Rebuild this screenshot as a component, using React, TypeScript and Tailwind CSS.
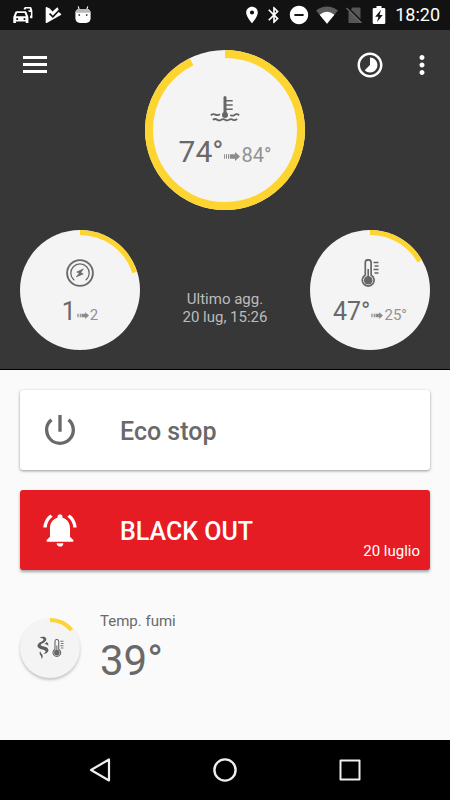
import React from "react";
import {
  MdBluetooth,
  MdDoNotDisturbOn,
  MdMoreVert,
  MdNotificationsActive,
  MdPlace,
  MdPowerSettingsNew,
  MdTimelapse,
} from "react-icons/md";

function Gauge({
  size,
  stroke,
  value,
  className,
  children,
}: {
  size: number;
  stroke: number;
  value: number;
  className: string;
  children: React.ReactNode;
}) {
  const r = (size - stroke) / 2;
  const c = 2 * Math.PI * r;
  return (
    <div className={`relative flex shrink-0 flex-col items-center rounded-full bg-[#f4f4f4] ${className}`}>
      <svg className="absolute inset-0 size-full -rotate-90" viewBox={`0 0 ${size} ${size}`} aria-hidden="true">
        <circle
          cx={size / 2}
          cy={size / 2}
          r={r}
          fill="none"
          stroke="#fed530"
          strokeWidth={stroke}
          strokeDasharray={`${c * value} ${c}`}
        />
      </svg>
      {children}
    </div>
  );
}

function Arrow({ className }: { className: string }) {
  return (
    <svg className={`shrink-0 ${className}`} viewBox="0 0 16 9" fill="#8c8c8c" aria-hidden="true">
      <path d="M0 2.300h.9v4.400H0zM1.900 2.300h1.100v4.400H1.900zM4 2.300h1.200v4.400H4zM6 2.300h5V0l5 4.500L11 9V6.700H6z" />
    </svg>
  );
}

function WaterTempIcon() {
  return (
    <svg className="h-7 w-[30px]" viewBox="0 0 30 28" fill="none" stroke="#666" aria-hidden="true">
      <path d="M15 3.500V21" strokeWidth="3" strokeLinecap="round" />
      <circle cx="15" cy="21" r="3" fill="#666" stroke="none" />
      <path d="M16 6.700h6.700M16 11h6.700M16 15.300h6.700" strokeWidth="1.500" />
      <path
        d="M.8 21.200c2-1.700 3.200-1.400 4.600-.6s2.700.9 4.600-.3M20.300 20.900c1.500 1 2.800.9 4.200 0s2.800-1.200 4.700.3M2.800 25.800c2-1.300 3.200-1 4.400-.1s2.600.9 4 0 2.600-.9 3.900 0 2.600.9 4 0 2.500-.9 3.800 0 2.300.7 4.300-.6"
        strokeWidth="1.800"
      />
    </svg>
  );
}

function PowerGaugeIcon() {
  return (
    <svg className="size-7" viewBox="0 0 28 28" fill="none" stroke="#6a6a6a" aria-hidden="true">
      <circle cx="14" cy="14" r="12.900" strokeWidth="1.900" />
      <path d="M8 21A9.200 9.200 0 1 1 20 21" strokeWidth="1.300" />
      <path d="M6.300 19l2.200 2.200M21.700 19l-2.200 2.200" strokeWidth="1" />
      <path d="M17.500 9.800l-6.800 3.300 2.600 1-3 3.800 7-3-2.500-1.300z" fill="#6a6a6a" strokeWidth=".6" />
    </svg>
  );
}

function ThermometerIcon({ className }: { className: string }) {
  return (
    <svg className={className} viewBox="0 0 18 28" fill="none" stroke="#666" aria-hidden="true">
      <path d="M4.300 16V3.700a2.900 2.900 0 0 1 5.800 0V16a5.900 5.900 0 1 1-5.800 0z" strokeWidth="1.700" />
      <circle cx="7.200" cy="21.200" r="4.300" fill="#666" stroke="none" />
      <path d="M7.200 10v9" strokeWidth="1.600" />
      <path d="M12.500 3.500h5M13.500 7h4M12.500 10.500h5M13.500 14h4" strokeWidth="1.400" />
    </svg>
  );
}

function SmokeIcon() {
  return (
    <svg className="h-6 w-3" viewBox="0 0 12 24" fill="#5e5e5e" aria-hidden="true">
      <path d="M2.500 1.500C4.500.6 8 .3 9 2.300c.8 1.600-.2 3-2 4.100C5.300 7.400 3.600 8 3.700 9c.2 1.300 3.800 1.200 6 2.500 2 1.200 2.300 3.200.8 4.700-1 1-2.700 1.500-4.300 1.600 1.500-.9 2.600-1.700 2.300-2.600-.4-1.200-3.700-1.300-5.900-2.600C.4 11.400-.2 9.400 1.300 7.700c1.200-1.300 3.400-1.900 4.600-2.900.9-.8.8-1.700 0-2.300-.9-.6-2.200-.7-3.400-1z" />
      <path d="M9.500 6c1.600.8 2.200 2.200 1.600 3.800-.8-1.200-2-1.700-3.600-1.900C8.500 7.400 9.200 6.800 9.500 6z" />
      <path d="M3.200 15.200c-1 1.500-.6 2.900.3 4.100.7 1 1.100 2 1 3.700 1.300-1.200 1.600-2.900.8-4.300-.6-1.100-1.800-1.900-2.100-3.500z" />
    </svg>
  );
}

function StatusBar() {
  return (
    <div className="flex h-[30px] items-center justify-between bg-[#121212] pr-[10px] pl-[13px] text-white">
      <div className="flex items-center gap-3">
        <svg className="h-[18px] w-5" viewBox="0 0 20 18" fill="currentColor" aria-hidden="true">
          <path d="M10.500 3.200L11.300 1.500Q11.600.9 12.300.9h5.200q.8 0 1 .8L19.400 5v7.200h-2.200l-.3-2.500 1-.2V6h-2L15 4.500l2.200-.2-.6-1.800h-3.700l-.4 1.300z" />
          <path
            fillRule="evenodd"
            d="M3.700 5.200h8.600q.9 0 1.200.8L15.400 11v6h-2.600v-1.600H2.900V17H.3v-6l2-5q.4-.8 1.400-.8zM4.100 6.900L2.800 10.300h10.100l-1.300-3.400zM4.200 11.900a1.100 1.100 0 1 0 .01 0zM11.500 11.900a1.100 1.100 0 1 0 .01 0z"
          />
        </svg>
        <svg className="h-[18px] w-[18px]" viewBox="0 0 18 18" fill="currentColor" aria-hidden="true">
          <path d="M.7 1.500Q.7.800 1.500 1.100L4.800 2.600 7.500 5.500 12.300 1.300l1 1.200.4 3.500 2.200 1.700q.8.700 0 1.200L1.700 17q-1 .4-1-.6z" />
          <path d="M4.600 7.600l3.300 3.300 6-6.400" fill="none" stroke="#121212" strokeWidth="1.700" />
        </svg>
        <svg className="h-[18px] w-4" viewBox="0 0 16 18" fill="currentColor" aria-hidden="true">
          <path d="M3.200.3l1.300 4M12.800.3l-1.300 4" stroke="currentColor" strokeWidth="1.100" />
          <path d="M.4 6.500Q1 3.200 4 3h8q3 .2 3.600 3.500v6q-.3 4-4.600 4.500H5q-4.300-.5-4.600-4.500z" />
          <path d="M.4 6.800Q.8 3.200 4 3h8q3.200.2 3.600 3.800z" fill="#b8b8b8" />
          <circle cx="4.300" cy="9" r=".9" fill="#444" />
          <circle cx="11.700" cy="9" r=".9" fill="#444" />
        </svg>
      </div>
      <div className="flex items-center">
        <span className="flex w-[22px] justify-center"><MdPlace size={20} /></span>
        <span className="flex w-[22px] justify-center"><MdBluetooth size={20} /></span>
        <span className="flex w-7 justify-center"><MdDoNotDisturbOn size={22} /></span>
        <span className="flex w-7 justify-center">
          <svg className="h-[18px] w-[22px]" viewBox="0 0 22 18" aria-hidden="true">
            <path d="M0 4.500Q11-3.700 22 4.500L11 17.800z" fill="#5c5c5c" />
            <path d="M3.600 8.700Q11 3 18.400 8.700L11 17.800z" fill="#fff" />
          </svg>
        </span>
        <span className="flex w-[26px] justify-center">
          <svg className="size-4" viewBox="0 0 16 16" aria-hidden="true">
            <path d="M6.500.5h7q1 0 1 1V16h-12V5z" fill="#565656" />
            <path d="M1.500.5l14.500 14.500" stroke="#121212" strokeWidth="2" />
            <path d="M.5 1l15 15" stroke="#6a6a6a" strokeWidth="1.300" />
          </svg>
        </span>
        <span className="mr-1 flex w-6 justify-center">
          <svg className="h-[18px] w-[14px]" viewBox="0 0 14 18" aria-hidden="true">
            <path d="M4.500 0h5v2H12q1.300 0 1.300 1.300v13.400Q13.300 18 12 18H2Q.7 18 .7 16.700V3.300Q.7 2 2 2h2.500z" fill="#fff" />
            <path d="M9 3.800L3.200 10.800h3.300L5 16l5.800-7H7.500z" fill="#121212" />
          </svg>
        </span>
        <span className="text-[18px] leading-6">18:20</span>
      </div>
    </div>
  );
}

export default function App() {
  return (
    <div className="flex min-h-screen flex-col bg-[#fafafa] font-['Roboto',sans-serif] text-[#696969]">
      <StatusBar />

      <header className="flex flex-col gap-5 border-b border-black bg-[#373738] pt-5 pb-[19px]">
        <div className="grid grid-cols-[1fr_auto_1fr] items-start text-white">
          <div className="pl-5">
            <button type="button" aria-label="Menu" className="flex size-[30px] items-center justify-center">
              <svg className="h-[18px] w-6" viewBox="0 0 24 18" fill="currentColor" aria-hidden="true">
                <path d="M0 0h24v3H0zM0 7h24v3H0zM0 14h24v3H0z" />
              </svg>
            </button>
          </div>
          <Gauge size={160} stroke={8} value={0.926} className="size-40 pt-11 text-[#696969]">
            <WaterTempIcon />
            <div className="mt-3 flex items-baseline text-[30px] leading-9">
              <span>74°</span>
              <Arrow className="mx-px h-[9px] w-4 -translate-y-px" />
              <span className="text-[20px] text-[#929292]">84°</span>
            </div>
          </Gauge>
          <div className="flex justify-end gap-[22px] pr-[13px]">
            <button type="button" aria-label="Timer">
              <MdTimelapse size={30} />
            </button>
            <button type="button" aria-label="Altro">
              <MdMoreVert size={30} />
            </button>
          </div>
        </div>

        <div className="flex items-start justify-between px-5">
          <Gauge size={120} stroke={5} value={0.2} className="size-[120px] pt-[29px]">
            <PowerGaugeIcon />
            <div className="mt-[10px] flex items-baseline text-[25px] leading-[30px]">
              <span>1</span>
              <Arrow className="mx-px h-[7px] w-3 -translate-y-px" />
              <span className="text-[15px] text-[#929292]">2</span>
            </div>
          </Gauge>
          <p className="pt-[60px] text-center text-[15px] leading-[18px] text-[#bcbcbc]">
            Ultimo agg.
            <br />
            20 lug, 15:26
          </p>
          <Gauge size={120} stroke={5} value={0.166} className="size-[120px] pt-[29px]">
            <ThermometerIcon className="h-7 w-[18px]" />
            <div className="mt-[10px] flex items-baseline text-[25px] leading-[30px]">
              <span>47°</span>
              <Arrow className="mx-px h-[7px] w-3 -translate-y-px" />
              <span className="text-[15px] text-[#929292]">25°</span>
            </div>
          </Gauge>
        </div>
      </header>

      <main className="flex flex-1 flex-col gap-5 p-5">
        <button
          type="button"
          className="flex h-20 items-center gap-10 rounded-[3px] bg-white px-5 text-left shadow-[0_1px_3px_rgba(0,0,0,0.4)]"
        >
          <MdPowerSettingsNew size={40} />
          <span className="pt-1 text-[25px] leading-8 font-medium">Eco stop</span>
        </button>
        <button
          type="button"
          className="flex h-20 items-center gap-10 rounded-[3px] bg-[#e51c23] pr-[10px] pl-5 text-left text-white shadow-[0_2px_3px_rgba(0,0,0,0.35)]"
        >
          <MdNotificationsActive size={40} />
          <span className="flex-1 pt-1 text-[25px] leading-8 font-medium">BLACK OUT</span>
          <span className="self-end pb-[10px] text-[15px] leading-[18px]">20 luglio</span>
        </button>

        <section className="flex items-start gap-5 pt-5">
          <Gauge
            size={60}
            stroke={4}
            value={0.139}
            className="mt-2 size-[60px] justify-center shadow-[0_2px_3px_rgba(0,0,0,0.22)]"
          >
            <div className="flex items-center gap-[3px]">
              <SmokeIcon />
              <ThermometerIcon className="h-[18px] w-3" />
            </div>
          </Gauge>
          <div>
            <h2 className="text-[15px] leading-[22px]">Temp. fumi</h2>
            <p className="text-[42px] leading-[58px]">39°</p>
          </div>
        </section>
      </main>

      <nav className="grid h-[60px] grid-cols-[1fr_125px_125px_125px_1fr] items-center justify-items-center bg-black">
        <button type="button" aria-label="Indietro" className="col-start-2">
          <svg className="size-6" viewBox="0 0 24 24" fill="none" stroke="#eee" strokeWidth="2.200" strokeLinejoin="round" aria-hidden="true">
            <path d="M21 1.500v21L3 12z" />
          </svg>
        </button>
        <button type="button" aria-label="Home">
          <svg className="size-6" viewBox="0 0 24 24" fill="none" stroke="#eee" strokeWidth="2.400" aria-hidden="true">
            <circle cx="12" cy="12" r="10.600" />
          </svg>
        </button>
        <button type="button" aria-label="Recenti">
          <svg className="size-6" viewBox="0 0 24 24" fill="none" stroke="#eee" strokeWidth="2" strokeLinejoin="round" aria-hidden="true">
            <rect x="2.500" y="2.500" width="19" height="19" />
          </svg>
        </button>
      </nav>
    </div>
  );
}
